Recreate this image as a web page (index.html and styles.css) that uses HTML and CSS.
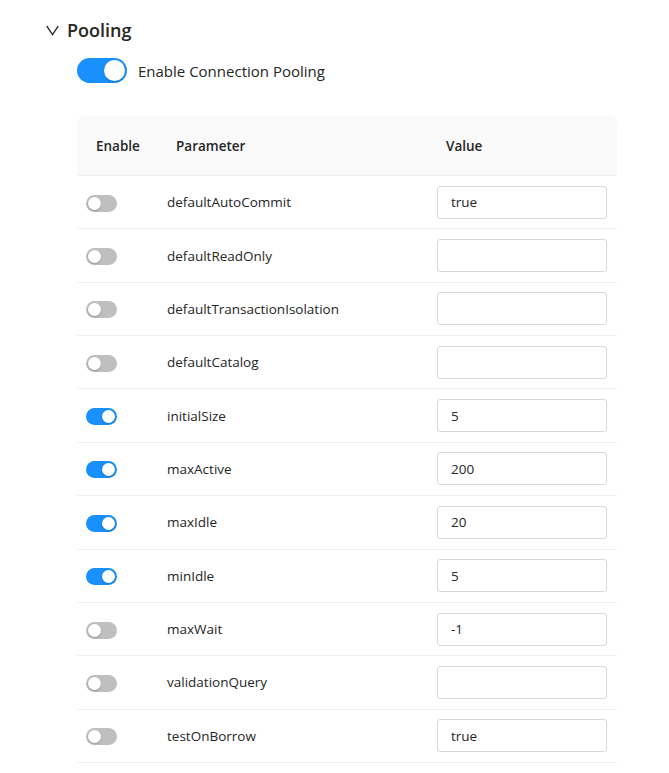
FILE: index.html
```html
<!DOCTYPE html>
<html>
<head>
<meta charset="utf-8">
<link rel="stylesheet" href="styles.css">
</head>
<body>
<div class="section">
  <div class="section-head">
    <svg class="chev" width="13" height="11" viewBox="0 0 13 11"><path d="M0.8 1.2 L6.5 9.6 L12.2 1.2" fill="none" stroke="#262626" stroke-width="1.4"/></svg>
    <span class="title">Pooling</span>
  </div>
  <div class="section-body">
    <div class="enable-row">
      <span class="switch big on"><span class="knob"></span></span>
      <span class="enable-label">Enable Connection Pooling</span>
    </div>
    <div class="table">
      <div class="row head">
        <div class="cell">Enable</div>
        <div class="cell">Parameter</div>
        <div class="cell">Value</div>
      </div>
      <div class="row"><div class="cell"><span class="switch"><span class="knob"></span></span></div><div class="cell">defaultAutoCommit</div><div class="cell"><input class="inp" value="true"></div></div>
      <div class="row"><div class="cell"><span class="switch"><span class="knob"></span></span></div><div class="cell">defaultReadOnly</div><div class="cell"><input class="inp" value=""></div></div>
      <div class="row"><div class="cell"><span class="switch"><span class="knob"></span></span></div><div class="cell">defaultTransactionIsolation</div><div class="cell"><input class="inp" value=""></div></div>
      <div class="row"><div class="cell"><span class="switch"><span class="knob"></span></span></div><div class="cell">defaultCatalog</div><div class="cell"><input class="inp" value=""></div></div>
      <div class="row"><div class="cell"><span class="switch on"><span class="knob"></span></span></div><div class="cell">initialSize</div><div class="cell"><input class="inp" value="5"></div></div>
      <div class="row"><div class="cell"><span class="switch on"><span class="knob"></span></span></div><div class="cell">maxActive</div><div class="cell"><input class="inp" value="200"></div></div>
      <div class="row"><div class="cell"><span class="switch on"><span class="knob"></span></span></div><div class="cell">maxIdle</div><div class="cell"><input class="inp" value="20"></div></div>
      <div class="row"><div class="cell"><span class="switch on"><span class="knob"></span></span></div><div class="cell">minIdle</div><div class="cell"><input class="inp" value="5"></div></div>
      <div class="row"><div class="cell"><span class="switch"><span class="knob"></span></span></div><div class="cell">maxWait</div><div class="cell"><input class="inp" value="-1"></div></div>
      <div class="row"><div class="cell"><span class="switch"><span class="knob"></span></span></div><div class="cell">validationQuery</div><div class="cell"><input class="inp" value=""></div></div>
      <div class="row"><div class="cell"><span class="switch"><span class="knob"></span></span></div><div class="cell">testOnBorrow</div><div class="cell"><input class="inp" value="true"></div></div>
    </div>
  </div>
</div>
</body>
</html>
```
FILE: styles.css
```css
* { box-sizing: border-box; }
body {
  margin: 0;
  padding: 17px 0 0 46px;
  background: #fff;
  font-family: "Open Sans", "Noto Sans", sans-serif;
  font-size: 13.5px;
  color: #262626;
}
.section-head {
  display: flex;
  align-items: center;
  height: 26px;
  gap: 8px;
}
.chev { display: block; margin-top: 0; }
.title {
  font-size: 18px;
  font-weight: 600;
  color: #262626;
}
.section-body {
  padding-left: 31px;
}
.enable-row {
  display: flex;
  align-items: center;
  gap: 11px;
  margin-top: 15px;
  height: 25px;
}
.enable-label { font-size: 15px; }
.switch {
  position: relative;
  display: inline-block;
  width: 31px;
  height: 17px;
  border-radius: 9px;
  background: #bfbfbf;
  vertical-align: middle;
}
.switch .knob {
  position: absolute;
  top: 2px;
  left: 2px;
  width: 13px;
  height: 13px;
  border-radius: 50%;
  background: #fff;
  box-shadow: 0 1px 2px rgba(0,35,11,0.25);
}
.switch.on { background: #1890ff; }
.switch.on .knob { left: 16px; }
.switch.big {
  width: 50px;
  height: 25px;
  border-radius: 13px;
}
.switch.big .knob {
  top: 2px;
  left: 27px;
  width: 21px;
  height: 21px;
}
.table {
  margin-top: 33px;
  width: 540px;
}
.row {
  display: grid;
  grid-template-columns: 80px 270px 190px;
  align-items: center;
  height: 53.36px;
  border-bottom: 1px solid #f0f0f0;
}
.row .cell { padding-left: 9px; }
.row .cell + .cell { padding-left: 10px; }
.row.head {
  height: 60px;
  background: #fafafa;
  border-radius: 8px 8px 0 0;
  font-weight: 600;
  font-size: 13.5px;
}
.row.head .cell { padding-left: 19px; }
.inp {
  display: block;
  width: 170px;
  height: 33px;
  border: 1px solid #d9d9d9;
  border-radius: 3px;
  padding: 0 13px;
  font-family: inherit;
  font-size: 13.5px;
  color: #262626;
  background: #fff;
  outline: none;
}
```
